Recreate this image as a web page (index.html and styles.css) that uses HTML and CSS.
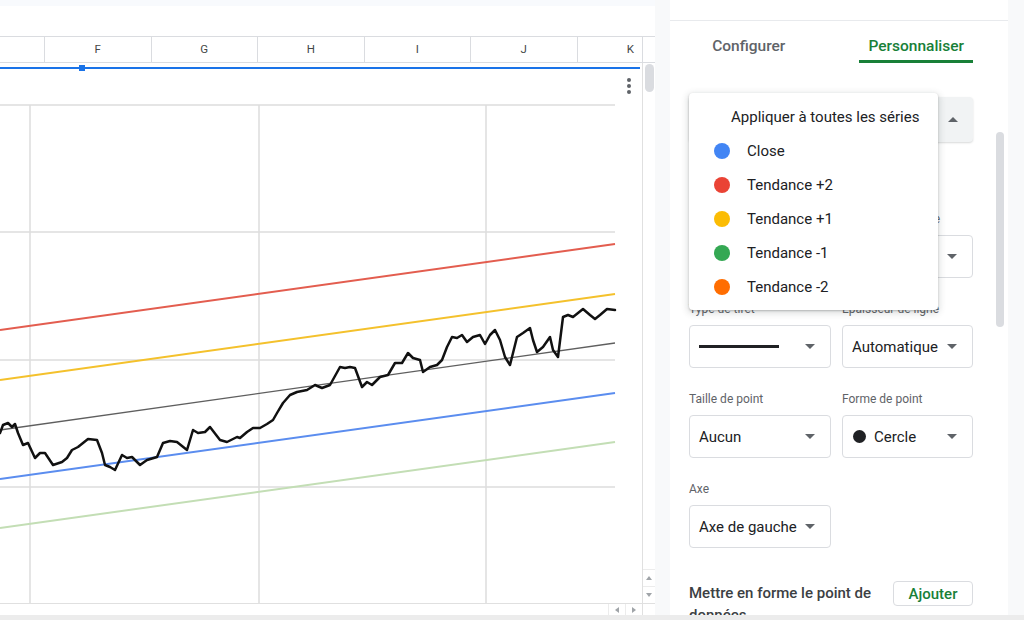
FILE: index.html
```html
<!DOCTYPE html>
<html lang="fr">
<head>
<meta charset="utf-8">
<title>Graphique</title>
<link rel="stylesheet" href="styles.css">
</head>
<body>
<div class="app">
  <div class="main">
    <section class="sheet">
      <div class="topstrip"></div>
      <div class="formula"></div>
      <div class="colhead">
        <div class="cols">
          <div class="ch ch-first"></div>
          <div class="ch">F</div>
          <div class="ch">G</div>
          <div class="ch">H</div>
          <div class="ch">I</div>
          <div class="ch">J</div>
          <div class="ch">K</div>
        </div>
        <div class="ch-corner"></div>
      </div>
      <div class="grid-body">
        <div class="chartarea">
          <div class="selbar"><span class="handle"></span></div>
          <svg class="chart" width="642" height="534" viewBox="0 69 642 534">
            <g stroke="#dcdcdc" stroke-width="1.5" fill="none">
              <line x1="0" y1="105" x2="615" y2="105"/>
              <line x1="0" y1="232" x2="615" y2="232"/>
              <line x1="0" y1="360" x2="615" y2="360"/>
              <line x1="0" y1="487" x2="615" y2="487"/>
              <line x1="30" y1="105" x2="30" y2="603"/>
              <line x1="259" y1="105" x2="259" y2="603"/>
              <line x1="486" y1="105" x2="486" y2="603"/>
            </g>
            <line x1="0" y1="330" x2="615" y2="244" stroke="#e35d4f" stroke-width="2"/>
            <line x1="0" y1="380" x2="615" y2="294" stroke="#f4c12c" stroke-width="2"/>
            <line x1="0" y1="430" x2="615" y2="343" stroke="#5f5f5f" stroke-width="1.3"/>
            <line x1="0" y1="479" x2="615" y2="393" stroke="#5b8def" stroke-width="2"/>
            <line x1="0" y1="528" x2="615" y2="442" stroke="#c3deb5" stroke-width="2"/>
            <polyline fill="none" stroke="#111111" stroke-width="2.5" stroke-linejoin="round" stroke-linecap="round"
              points="0,433 3,425 8,423 12,427 15,424 18,433 23,445 28,443 35,458 40,453 45,453 53,465 62,462 67,458 72,450 78,447 88,439 97,440 102,453 105,465 110,467 115,470 122,455 127,458 132,457 140,465 147,460 157,457 163,443 170,441 177,442 187,450 193,430 198,433 205,432 210,427 220,440 227,442 237,437 240,438 247,432 253,428 260,428 267,424 273,420 277,413 283,403 290,395 297,392 307,390 315,385 322,388 330,385 340,367 345,368 350,367 355,368 362,387 367,382 372,385 380,377 388,375 395,363 402,363 408,353 413,358 420,360 423,372 430,367 437,365 442,360 447,347 452,337 457,338 462,335 467,342 473,337 480,335 485,344 490,335 495,330 500,340 505,357 510,365 517,337 523,333 530,328 533,340 537,352 543,347 550,337 553,350 558,357 563,317 568,315 573,317 583,309 590,315 595,319 600,315 607,309 615,310"/>
          </svg>
          <div class="kebab"><i></i><i></i><i></i></div>
        </div>
        <div class="vscroll">
          <div class="vthumb"></div>
          <div class="vbtn"><span class="tri-up"></span></div>
          <div class="vbtn"><span class="tri-down"></span></div>
        </div>
      </div>
      <div class="hscroll">
        <div class="hbtn"><span class="tri-left"></span></div>
        <div class="hbtn"><span class="tri-right"></span></div>
        <div class="hcorner"></div>
      </div>
    </section>

    <div class="gutter"></div>

    <aside class="panel">
      <div class="ptop"></div>
      <div class="pwrap">
        <div class="pcontent">
          <div class="tabs">
            <div class="tab tab-config">Configurer</div>
            <div class="tab tab-custom active">Personnaliser</div>
          </div>

          <div class="series-select">
            <span class="dot dot-blue"></span>
            <span class="caret-up"></span>
          </div>

          <div class="fgrid first-row">
            <div class="field">
              <div class="flabel">&nbsp;</div>
              <div class="sel"><span class="swatch"></span><span class="caret"></span></div>
            </div>
            <div class="field">
              <div class="flabel flabel-right">Opacité de la ligne</div>
              <div class="sel"><span class="caret"></span></div>
            </div>
            <div class="field">
              <div class="flabel">Type de tiret</div>
              <div class="sel"><span class="dash"></span><span class="caret"></span></div>
            </div>
            <div class="field">
              <div class="flabel">Épaisseur de ligne</div>
              <div class="sel"><span>Automatique</span><span class="caret"></span></div>
            </div>
            <div class="field">
              <div class="flabel">Taille de point</div>
              <div class="sel"><span>Aucun</span><span class="caret"></span></div>
            </div>
            <div class="field">
              <div class="flabel">Forme de point</div>
              <div class="sel"><span class="circle"></span><span>Cercle</span><span class="caret"></span></div>
            </div>
            <div class="field">
              <div class="flabel">Axe</div>
              <div class="sel"><span>Axe de gauche</span><span class="caret"></span></div>
            </div>
          </div>

          <div class="format-row">
            <div class="format-title">Mettre en forme le point de données</div>
            <button class="btn-add">Ajouter</button>
          </div>
        </div>
        <div class="pscroll"><div class="pthumb"></div></div>
      </div>

      <div class="menu">
        <div class="mitem mhead">Appliquer à toutes les séries</div>
        <div class="mitem"><span class="mdot" style="background:#4285f4"></span>Close</div>
        <div class="mitem"><span class="mdot" style="background:#ea4335"></span>Tendance +2</div>
        <div class="mitem"><span class="mdot" style="background:#fbbc04"></span>Tendance +1</div>
        <div class="mitem"><span class="mdot" style="background:#34a853"></span>Tendance -1</div>
        <div class="mitem"><span class="mdot" style="background:#ff6d01"></span>Tendance -2</div>
      </div>
    </aside>

    <div class="rgutter"></div>
  </div>
  <div class="bottomstrip"></div>
</div>
</body>
</html>
```
FILE: styles.css
```css
* { box-sizing: border-box; }

body {
  margin: 0;
  width: 1024px;
  height: 620px;
  overflow: hidden;
  font-family: Roboto, "Noto Sans", Arial, sans-serif;
  background: #f8f9fa;
  color: #202124;
}

.app {
  display: grid;
  grid-template-rows: 615px 5px;
  height: 620px;
}

.main {
  display: flex;
  overflow: hidden;
}

/* ---------- spreadsheet ---------- */
.sheet {
  width: 655px;
  flex: none;
  display: flex;
  flex-direction: column;
  background: #fff;
}

.topstrip { height: 6px; background: #f8fafd; }
.formula { height: 30px; background: #fff; }

.colhead {
  height: 27px;
  border-top: 1px solid #dadce0;
  border-bottom: 1px solid #dadce0;
  display: flex;
}

.cols {
  width: 642px;
  display: flex;
  overflow: hidden;
}

.ch {
  flex: none;
  width: 106.5px;
  border-left: 1px solid #dadce0;
  text-align: center;
  line-height: 25px;
  font-size: 11.5px;
  color: #444746;
}

.ch-first { width: 44px; border-left: none; }

.ch-corner {
  flex: 1;
  border-left: 1px solid #dadce0;
}

.grid-body {
  height: 540px;
  display: flex;
}

.chartarea {
  width: 642px;
  position: relative;
  overflow: hidden;
  background: #fff;
}

.selbar {
  position: relative;
  margin-top: 4px;
  width: 640px;
  height: 2px;
  background: #1a73e8;
}

.handle {
  position: absolute;
  left: 79px;
  top: -2px;
  width: 6px;
  height: 6px;
  background: #1a73e8;
}

.chart { display: block; }

.kebab {
  position: absolute;
  left: 627px;
  top: 15px;
  display: flex;
  flex-direction: column;
  gap: 2px;
}

.kebab i {
  display: block;
  width: 4px;
  height: 4px;
  border-radius: 50%;
  background: #5f6368;
}

.vscroll {
  flex: 1;
  border-left: 1px solid #e0e0e0;
  display: flex;
  flex-direction: column;
  align-items: center;
}

.vthumb {
  margin-top: 1px;
  width: 9px;
  height: 28px;
  border-radius: 5px;
  background: #dadce0;
}

.vbtn {
  width: 100%;
  height: 17px;
  border-top: 1px solid #ececec;
  display: flex;
  align-items: center;
  justify-content: center;
}

.vthumb + .vbtn { margin-top: auto; }

.tri-up {
  border-left: 3.5px solid transparent;
  border-right: 3.5px solid transparent;
  border-bottom: 4px solid #a0a4a8;
}
.tri-down {
  border-left: 3.5px solid transparent;
  border-right: 3.5px solid transparent;
  border-top: 4px solid #a0a4a8;
}
.tri-left {
  border-top: 3.5px solid transparent;
  border-bottom: 3.5px solid transparent;
  border-right: 4px solid #a0a4a8;
}
.tri-right {
  border-top: 3.5px solid transparent;
  border-bottom: 3.5px solid transparent;
  border-left: 4px solid #a0a4a8;
}

.hscroll {
  height: 12px;
  border-top: 1px solid #e0e0e0;
  display: flex;
  justify-content: flex-end;
}

.hbtn {
  width: 17px;
  border-left: 1px solid #ececec;
  display: flex;
  align-items: center;
  justify-content: center;
}

.hcorner {
  width: 13px;
  border-left: 1px solid #e0e0e0;
}

.gutter {
  width: 15px;
  flex: none;
  background: #f8f9fa;
}

.rgutter {
  flex: 1;
  background: #f8f9fa;
}

.bottomstrip { background: #ececec; }

/* ---------- side panel ---------- */
.panel {
  width: 338px;
  flex: none;
  background: #fff;
  position: relative;
  overflow: hidden;
  display: flex;
  flex-direction: column;
}

.ptop {
  height: 21px;
  border-bottom: 1px solid #e8eaed;
}

.pwrap {
  flex: 1;
  display: flex;
  min-height: 0;
}

.pcontent {
  width: 322px;
  padding: 0 19px;
}

.pscroll {
  flex: 1;
  padding-left: 4px;
}

.pthumb {
  margin-top: 111px;
  width: 8px;
  height: 195px;
  border-radius: 4px;
  background: #dadce0;
}

.tabs {
  display: flex;
  height: 42px;
}

.tab {
  height: 42px;
  padding-top: 15px;
  line-height: 20px;
  font-size: 15.5px;
  font-weight: 500;
  color: #5f6368;
  text-align: center;
  border-bottom: 3px solid transparent;
}

.tab-config { width: 121px; }
.tab-custom { width: 115px; margin-left: 51px; }

.tab.active {
  color: #188038;
  border-bottom-color: #188038;
}

.series-select {
  margin-top: 34px;
  height: 45px;
  border-radius: 4px;
  background: #f1f3f4;
  box-shadow: 0 1px 2px rgba(60, 64, 67, 0.2);
  display: flex;
  align-items: center;
  padding: 0 15px 0 12px;
  font-size: 15px;
}

.dot {
  width: 14px;
  height: 14px;
  border-radius: 50%;
  margin-right: 10px;
}
.dot-blue { background: #4285f4; }

.caret-up {
  margin-left: auto;
  border-left: 5px solid transparent;
  border-right: 5px solid transparent;
  border-bottom: 5px solid #5f6368;
}

.fgrid {
  display: grid;
  grid-template-columns: 142px 131px;
  column-gap: 11px;
  row-gap: 23px;
}

.first-row { margin-top: 69px; }

.flabel {
  font-size: 12px;
  line-height: 16px;
  color: #5f6368;
  white-space: nowrap;
  margin-bottom: 8px;
}

.sel {
  height: 43px;
  border: 1px solid #dadce0;
  border-radius: 4px;
  display: flex;
  align-items: center;
  padding: 0 15px 0 9px;
  font-size: 15px;
  color: #202124;
  white-space: nowrap;
}

.caret {
  margin-left: auto;
  border-left: 5px solid transparent;
  border-right: 5px solid transparent;
  border-top: 5px solid #5f6368;
}

.swatch {
  width: 18px;
  height: 18px;
  border-radius: 50%;
  background: #4285f4;
}

.dash {
  width: 80px;
  height: 2.5px;
  background: #202124;
}

.circle {
  width: 13px;
  height: 13px;
  border-radius: 50%;
  background: #202124;
  margin: 0 8px 0 1px;
}

.format-row {
  margin-top: 34px;
  display: flex;
  justify-content: space-between;
  align-items: flex-start;
}

.format-title {
  width: 196px;
  font-size: 15px;
  font-weight: 500;
  line-height: 22px;
  color: #3c4043;
}

.btn-add {
  width: 80px;
  height: 25px;
  margin-top: -1px;
  border: 1px solid #dadce0;
  border-radius: 4px;
  background: #fff;
  color: #188038;
  font-family: inherit;
  font-size: 15px;
  font-weight: 500;
  padding: 0;
}

/* ---------- dropdown menu ---------- */
.menu {
  position: absolute;
  left: 19px;
  top: 93px;
  width: 249px;
  padding: 7px 0 6px;
  background: #fff;
  border-radius: 4px;
  box-shadow: 0 2px 6px 2px rgba(60, 64, 67, 0.15), 0 1px 2px rgba(60, 64, 67, 0.3);
}

.mitem {
  height: 34px;
  display: flex;
  align-items: center;
  padding-left: 25px;
  font-size: 15px;
  color: #202124;
  white-space: nowrap;
}

.mhead { padding-left: 42px; }

.mdot {
  width: 16px;
  height: 16px;
  border-radius: 50%;
  margin-right: 17px;
}
```
